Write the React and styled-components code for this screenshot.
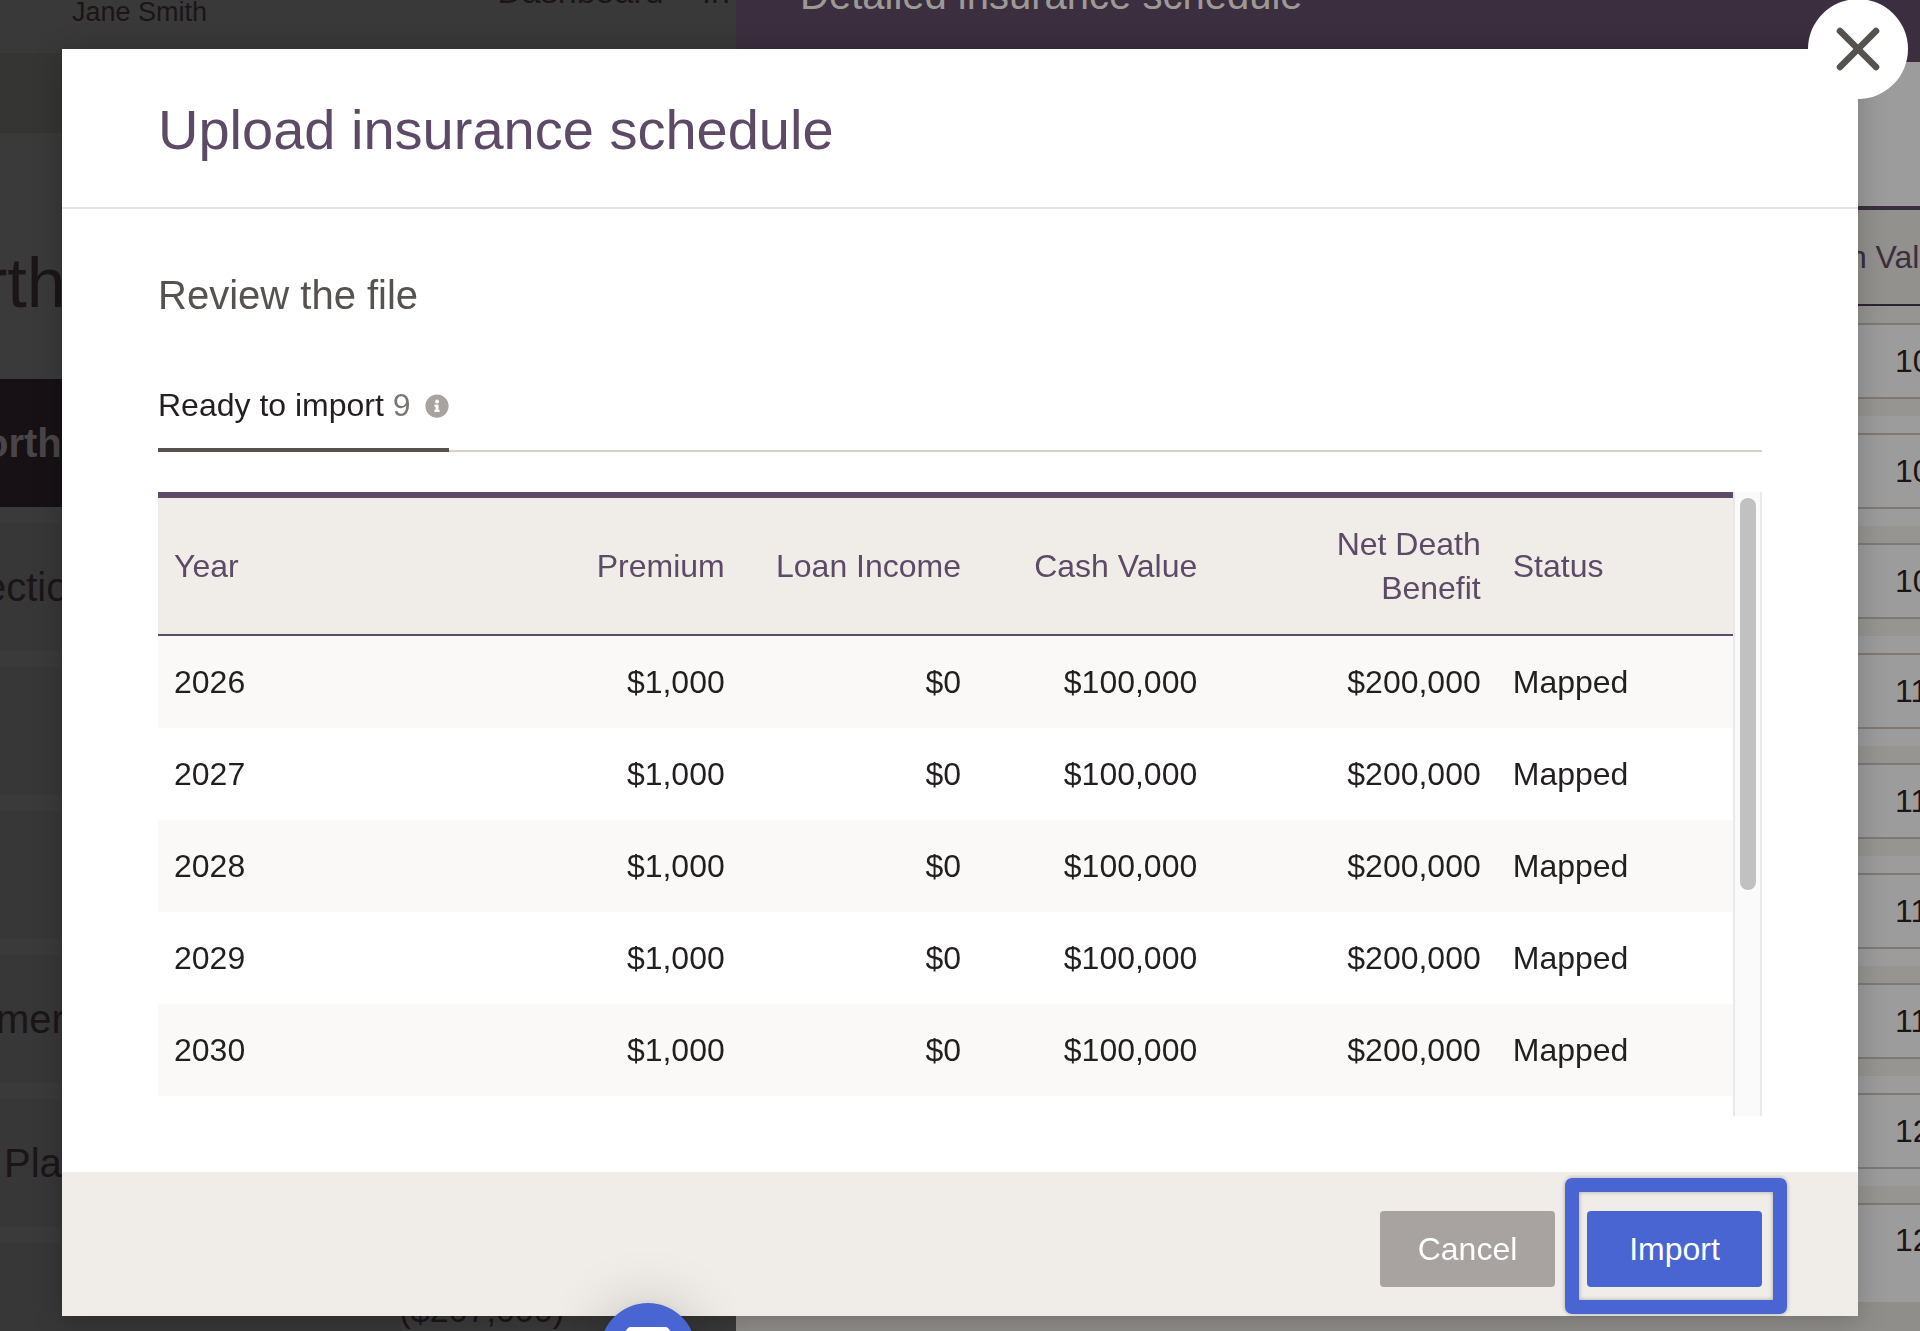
import React, { useState } from 'react'
import styled, { createGlobalStyle } from 'styled-components'
import { FiX } from 'react-icons/fi'
import { FaInfoCircle } from 'react-icons/fa'

const navItems = [
  { label: 'orth', active: true },
  { label: 'ectio' },
  { label: '' },
  { label: '' },
  { label: 'mer', indent: '12px' },
  { label: 'Plan', indent: '20px' },
  { label: '' },
]

const cashValues = ['10', '10', '10', '11', '11', '11', '11', '12', '12']

const years = [2026, 2027, 2028, 2029, 2030, 2031, 2032, 2033, 2034]
const rows = years.map((year) => ({
  year,
  premium: '$1,000',
  loan: '$0',
  cash: '$100,000',
  benefit: '$200,000',
  status: 'Mapped',
}))

const ClientPage = () => {
  return (
    <Client>
      <TopBar>
        <span className='user'>Jane Smith</span>
        <a href='#dashboard'>Dashboard</a>
        <a href='#in'>In</a>
      </TopBar>
      <SubBar />
      <ClientTitle>rth</ClientTitle>
      <ClientBody>
        <SideNav>
          {navItems.map((item, index) => (
            <NavItem key={index} $active={item.active} $indent={item.indent}>
              {item.label}
            </NavItem>
          ))}
        </SideNav>
        <Total>($207,000)</Total>
      </ClientBody>
    </Client>
  )
}

const SchedulePanel = () => {
  return (
    <Panel>
      <PanelHeader>
        <h2>Detailed insurance schedule</h2>
      </PanelHeader>
      <PanelBody>
        <EditTable>
          <thead>
            <tr>
              <th>Cash Value</th>
            </tr>
          </thead>
          <tbody>
            {cashValues.map((value, index) => (
              <tr key={index}>
                <td>
                  <input aria-label='Cash Value' defaultValue={value} />
                </td>
              </tr>
            ))}
          </tbody>
        </EditTable>
      </PanelBody>
    </Panel>
  )
}

const ReviewTable = () => {
  // share of the content that is scrolled past, and that fits in view
  const [scroll, setScroll] = useState({ top: 0, size: 64 })

  const handleScroll = (e) => {
    const { scrollTop, scrollHeight, clientHeight } = e.currentTarget
    const size = (clientHeight / scrollHeight) * 100
    setScroll({ top: (scrollTop / clientHeight) * 100, size })
  }

  return (
    <TableFrame>
      <TableScroll onScroll={handleScroll} tabIndex={0}>
        <Table>
          <colgroup>
            <col style={{ width: '22%' }} />
            <col style={{ width: '15%' }} />
            <col style={{ width: '15%' }} />
            <col style={{ width: '15%' }} />
            <col style={{ width: '18%' }} />
            <col style={{ width: '15%' }} />
          </colgroup>
          <thead>
            <tr>
              <Th>Year</Th>
              <Th $number>Premium</Th>
              <Th $number>Loan Income</Th>
              <Th $number>Cash Value</Th>
              <Th $number>Net Death Benefit</Th>
              <Th>Status</Th>
            </tr>
          </thead>
          <tbody>
            {rows.map((row) => {
              const { year, premium, loan, cash, benefit, status } = row
              return (
                <tr key={year}>
                  <Td>{year}</Td>
                  <Td $number>{premium}</Td>
                  <Td $number>{loan}</Td>
                  <Td $number>{cash}</Td>
                  <Td $number>{benefit}</Td>
                  <Td>{status}</Td>
                </tr>
              )
            })}
          </tbody>
        </Table>
      </TableScroll>
      <ScrollTrack>
        <ScrollThumb
          style={{
            height: `${scroll.size}%`,
            transform: `translateY(${scroll.top}%)`,
          }}
        />
      </ScrollTrack>
    </TableFrame>
  )
}

const App = () => {
  return (
    <>
      <GlobalStyle />
      <Page>
        <ClientPage />
        <SchedulePanel />
      </Page>
      <Overlay>
        <Modal role='dialog' aria-labelledby='upload-title'>
          <CloseButton aria-label='Close'>
            <FiX strokeWidth={2.2} />
          </CloseButton>
          <ModalHeader>
            <h1 id='upload-title'>Upload insurance schedule</h1>
          </ModalHeader>
          <ModalBody>
            <h2>Review the file</h2>
            <Tabs role='tablist'>
              <Tab role='tab' aria-selected='true'>
                <span>
                  Ready to import <Count>9</Count>
                </span>
                <FaInfoCircle className='info' />
              </Tab>
            </Tabs>
            <ReviewTable />
          </ModalBody>
          <ModalFooter>
            <Button>Cancel</Button>
            <Highlight>
              <Button $primary>Import</Button>
            </Highlight>
          </ModalFooter>
        </Modal>
      </Overlay>
      <ChatButton aria-label='Open chat'>
        <svg width='44' height='40' viewBox='0 0 44 40'>
          <path d='M5 0h34a5 5 0 0 1 5 5v24a5 5 0 0 1-5 5H28l-10 6v-6H5a5 5 0 0 1-5-5V5a5 5 0 0 1 5-5z' fill='#fff' />
        </svg>
      </ChatButton>
    </>
  )
}

const GlobalStyle = createGlobalStyle`
  :root {
    --purple: #5c4a66;
    --purple-dim: #3b2e3e;
    --ink: #231f20;
    --ink-dim: #1b1518;
    --grey: #575250;
    --grey-light: #a8a2a0;
    --sand: #f0ede8;
    --blue: #4865d2;
  }
  * {
    box-sizing: border-box;
  }
  body {
    margin: 0;
    overflow: hidden;
    font-family: 'Liberation Sans', Arial, sans-serif;
    font-size: 32px;
    line-height: 44px;
    color: var(--ink);
  }
  h1,
  h2 {
    margin: 0;
    font-weight: 400;
  }
  button,
  input {
    font: inherit;
  }
`

const Page = styled.div`
  display: grid;
  grid-template-columns: 736px minmax(0, 1fr);
  height: 100vh;
  overflow: hidden;
`

const Client = styled.main`
  display: flex;
  flex-direction: column;
  min-height: 0;
  overflow: hidden;
  background: #3a3a3a;
  color: var(--ink-dim);
`

const TopBar = styled.header`
  display: flex;
  flex: none;
  height: 53px;
  padding-left: 72px;
  background: #393939;
  .user {
    flex: 1;
    font-size: 27px;
    line-height: 24px;
  }
  a {
    margin: -31px 6px 0 32px;
    color: inherit;
    font-size: 34px;
    text-decoration: none;
  }
`

const SubBar = styled.div`
  flex: none;
  height: 80px;
  background: #353533;
`

const ClientTitle = styled.h1`
  flex: none;
  height: 246px;
  margin-left: -16px;
  padding-top: 110px;
  font-size: 70px;
  line-height: 80px;
`

const ClientBody = styled.div`
  display: flex;
  flex: 1;
  min-height: 0;
`

const SideNav = styled.nav`
  display: flex;
  flex: 1;
  flex-direction: column;
  gap: 16px;
  margin-left: -16px;
`

const NavItem = styled.div`
  flex: none;
  height: 128px;
  padding-left: ${(props) => props.$indent || 0};
  background: ${(props) => (props.$active ? '#171115' : '#373737')};
  color: ${(props) => (props.$active ? '#484647' : 'inherit')};
  font-size: 40px;
  font-weight: ${(props) => (props.$active ? 700 : 400)};
  line-height: 128px;
`

const Total = styled.div`
  align-self: flex-end;
  margin-right: 172px;
  padding-bottom: 1px;
  font-size: 34px;
  line-height: 40px;
`

const Panel = styled.aside`
  display: flex;
  flex-direction: column;
  min-height: 0;
  overflow: hidden;
  background: #8f8e8b;
`

const PanelHeader = styled.div`
  flex: none;
  height: 62px;
  padding-left: 64px;
  background: var(--purple-dim);
  h2 {
    margin-top: -29px;
    color: #9d9a96;
    font-size: 40px;
    line-height: 48px;
  }
`

const PanelBody = styled.div`
  flex: none;
  display: flex;
  justify-content: flex-end;
  padding-top: 144px;
  background: #9c9c9c;
`

const EditTable = styled.table`
  flex: none;
  width: 200px;
  margin-right: -60px;
  border-spacing: 0;
  th {
    height: 100px;
    padding: 0 12px;
    border-top: 4px solid var(--purple-dim);
    border-bottom: 2px solid #2f2333;
    background: #93918e;
    color: var(--purple-dim);
    font-weight: 400;
    text-align: left;
    white-space: nowrap;
  }
  td {
    padding: 17px 0;
  }
  tr:nth-child(odd) td {
    background: #979592;
  }
  input {
    display: block;
    width: 100%;
    height: 76px;
    padding: 0 0 0 113px;
    border: 2px solid #7e7975;
    border-radius: 0;
    background: #9c9c9c;
    color: var(--ink-dim);
  }
  tr:last-child td {
    padding-bottom: 0;
  }
  tr:last-child input {
    height: 99px;
    padding-bottom: 26px;
    border-bottom: 0;
  }
`

const Overlay = styled.div`
  position: fixed;
  inset: 0;
  padding: 49px 62px 15px;
`

const Modal = styled.section`
  position: relative;
  background: #fff;
  box-shadow: 0 4px 28px rgba(0, 0, 0, 0.22);
`

const CloseButton = styled.button`
  position: absolute;
  top: -50px;
  right: -50px;
  display: grid;
  place-items: center;
  width: 100px;
  height: 100px;
  padding: 0;
  border: 0;
  border-radius: 50%;
  background: #fff;
  color: var(--grey);
  font-size: 72px;
`

const ModalHeader = styled.header`
  padding: 49px 96px 45px;
  border-bottom: 2px solid #e4e4e4;
  h1 {
    color: var(--purple);
    font-size: 56px;
    line-height: 64px;
  }
`

const ModalBody = styled.div`
  padding: 62px 96px 56px;
  h2 {
    margin-bottom: 64px;
    color: var(--grey);
    font-size: 40px;
    line-height: 48px;
  }
`

const Tabs = styled.div`
  display: flex;
  margin-bottom: 40px;
  box-shadow: inset 0 -2px 0 #d7d1c5;
`

const Tab = styled.button`
  display: flex;
  align-items: center;
  gap: 14px;
  padding: 0 0 21px;
  border: 0;
  border-bottom: 4px solid var(--grey);
  background: none;
  color: var(--ink);
  .info {
    margin-top: 2px;
    color: var(--grey-light);
    font-size: 24px;
  }
`

const Count = styled.span`
  color: #7b7674;
`

const TableFrame = styled.div`
  display: flex;
  height: 624px;
`

const TableScroll = styled.div`
  flex: 1;
  overflow-y: auto;
  outline: none;
  scrollbar-width: none;
`

const ScrollTrack = styled.div`
  flex: none;
  width: 29px;
  padding: 6px 4px 6px 5px;
  border: solid #e8e8e8;
  border-width: 0 2px;
  background: #fafafa;
`

const ScrollThumb = styled.div`
  width: 16px;
  border-radius: 8px;
  background: #c1c1c1;
`

const Table = styled.table`
  width: 100%;
  table-layout: fixed;
  border-spacing: 0;
  tbody tr:nth-child(odd) {
    background: #faf9f7;
  }
`

const Th = styled.th`
  padding: 24px 16px;
  padding-left: ${(props) => (props.$number ? '32px' : '16px')};
  border-top: 6px solid var(--purple);
  border-bottom: 2px solid var(--purple);
  background: var(--sand);
  color: var(--purple);
  font-weight: 400;
  text-align: ${(props) => (props.$number ? 'right' : 'left')};
`

const Td = styled.td`
  height: 92px;
  padding: 0 16px;
  text-align: ${(props) => (props.$number ? 'right' : 'left')};
`

const ModalFooter = styled.footer`
  display: flex;
  justify-content: flex-end;
  gap: 32px;
  padding: 39px 96px 29px;
  background: var(--sand);
`

const Button = styled.button`
  display: block;
  width: 175px;
  height: 76px;
  padding: 0;
  border: 0;
  border-radius: 4px;
  background: ${(props) => (props.$primary ? 'var(--blue)' : 'var(--grey-light)')};
  color: #fff;
`

const Highlight = styled.div`
  position: relative;
  &::after {
    content: '';
    position: absolute;
    inset: -33px -25px -27px -22px;
    border: 14px solid var(--blue);
    border-radius: 7px;
    box-shadow: 0 0 4px rgba(0, 0, 0, 0.3), inset 0 0 4px rgba(0, 0, 0, 0.3);
    pointer-events: none;
  }
`

const ChatButton = styled.button`
  position: fixed;
  bottom: -68px;
  left: 600px;
  display: flex;
  justify-content: center;
  width: 96px;
  height: 96px;
  padding: 24px 0 0;
  border: 0;
  border-radius: 50%;
  background: var(--blue);
  box-shadow: 0 4px 64px rgba(0, 0, 0, 0.2), 0 2px 12px rgba(0, 0, 0, 0.1);
`

export default App
